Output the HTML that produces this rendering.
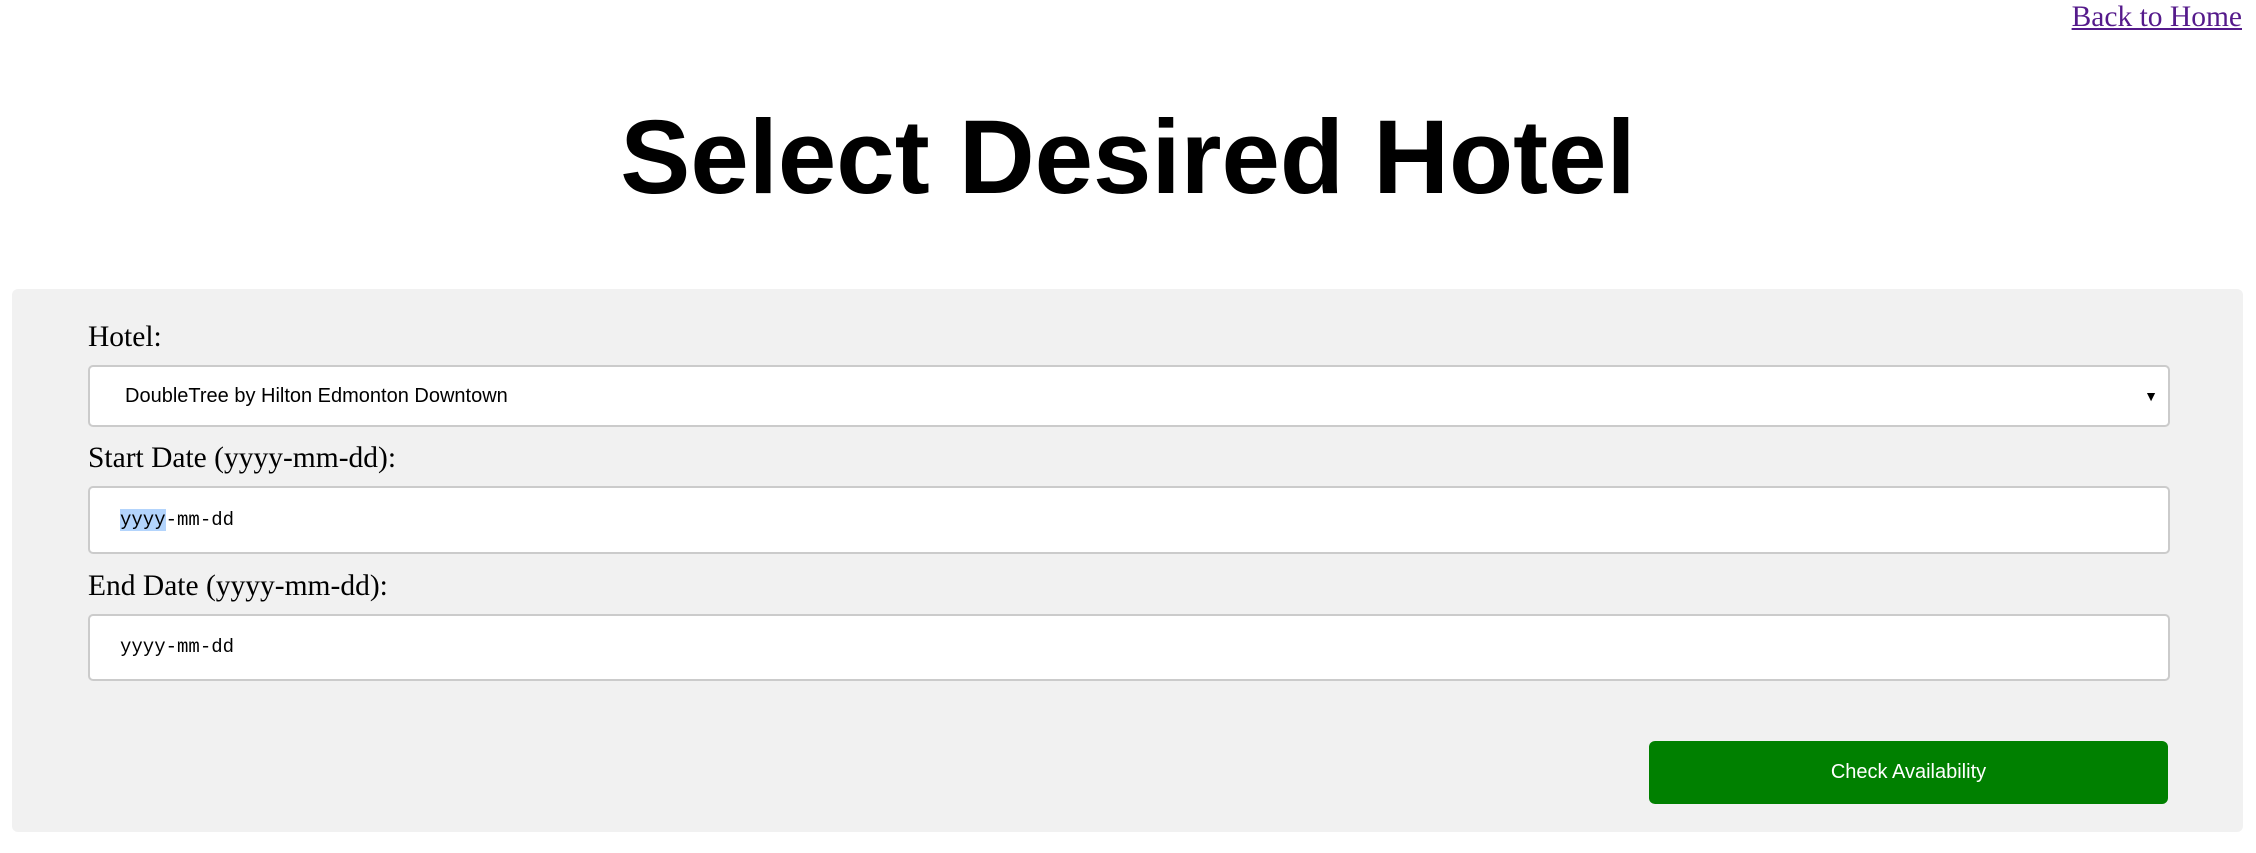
<!DOCTYPE html>
<html><head><meta charset="utf-8"><style>
html,body{margin:0;padding:0;background:#fff;width:2256px;height:853px;overflow:hidden;position:relative}
.back{position:absolute;right:14px;top:1px;font:29.5px "Liberation Serif",serif;color:#551a8b;text-decoration:underline}
h1{position:absolute;left:0;width:2256px;top:88px;margin:0;text-align:center;font:bold 105px/140px "Liberation Sans",sans-serif;color:#000}
.panel{position:absolute;left:12px;top:289px;width:2231px;height:543px;background:#f1f1f1;border-radius:6px}
.lbl{position:absolute;left:88px;font:29.5px/34px "Liberation Serif",serif;color:#000}
.box{position:absolute;left:88px;width:2082px;background:#fff;border:2px solid #cbcbcb;border-radius:5px;box-sizing:border-box}
.sel{font:20px "Liberation Sans",sans-serif;color:#000}
.mono{font:19px "Liberation Mono",monospace;color:#000}
.btn{position:absolute;left:1649px;top:741px;width:519px;height:63px;background:#008000;border-radius:6px;color:#fff;font:20px/63px "Liberation Sans",sans-serif;text-align:center}
</style></head><body>
<a class="back">Back to Home</a>
<h1>Select Desired Hotel</h1>
<div class="panel"></div>
<div class="lbl" style="top:320px">Hotel:</div>
<div class="box sel" style="top:365px;height:62px;line-height:58px;padding-left:35px">DoubleTree by Hilton Edmonton Downtown<span style="position:absolute;right:10px;top:0;font-size:14px">▼</span></div>
<div class="lbl" style="top:441px">Start Date (yyyy-mm-dd):</div>
<div class="box mono" style="top:486px;height:68px;line-height:64px;padding-left:30px"><span style="background:#b3d4fc">yyyy</span>-mm-dd</div>
<div class="lbl" style="top:569px">End Date (yyyy-mm-dd):</div>
<div class="box mono" style="top:614px;height:67px;line-height:63px;padding-left:30px">yyyy-mm-dd</div>
<div class="btn">Check Availability</div>
</body></html>
